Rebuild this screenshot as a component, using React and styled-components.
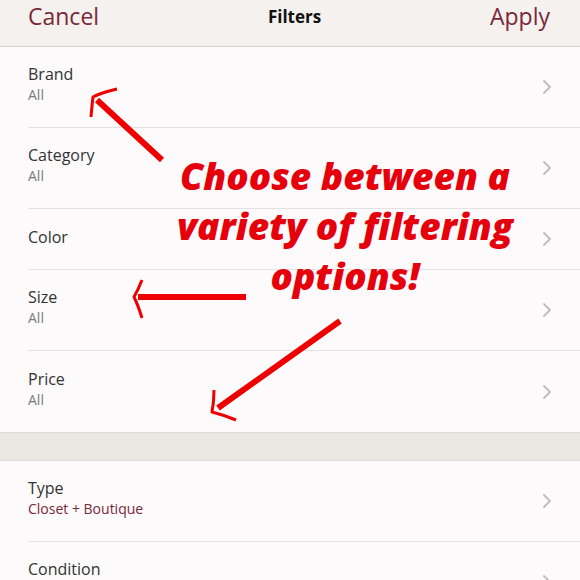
import React from "react";
import styled, { createGlobalStyle } from "styled-components";

const Global = createGlobalStyle`
  html, body { margin: 0; padding: 0; background: #fcfafb; }
  body { font-family: "Open Sans", "Liberation Sans", sans-serif; }
  * { box-sizing: border-box; }
`;

const Screen = styled.div`
  position: relative;
  width: 580px;
  height: 580px;
  overflow: hidden;
  background: #fcfafb;
`;

const Header = styled.div`
  height: 47px;
  display: flex;
  align-items: flex-start;
  justify-content: space-between;
  padding: 0 30px 0 28px;
  background: #f4f1ee;
  border-bottom: 1px solid #d6d3d1;
`;

const HeaderButton = styled.span`
  font-family: "Open Sans", sans-serif;
  font-size: 23px;
  line-height: 32px;
  color: #7a2838;
  font-weight: 400;
`;

const Title = styled.span`
  font-family: "Open Sans", sans-serif;
  font-size: 17px;
  font-weight: 700;
  line-height: 34px;
  color: #111;
`;

const List = styled.div`
  display: flex;
  flex-direction: column;
`;

const Row = styled.div`
  height: ${(p) => (p.single ? 61 : 81)}px;
  margin-left: 28px;
  padding-right: 28px;
  display: flex;
  align-items: center;
  justify-content: space-between;
  border-bottom: ${(p) => (p.last ? "none" : "1px solid #e4e1e2")};
`;

const Texts = styled.div`
  display: flex;
  flex-direction: column;
  gap: 1px;
  margin-top: -5px;
`;

const Label = styled.div`
  font-size: 16px;
  line-height: 20px;
  color: #333;
`;

const Sub = styled.div`
  font-size: 14px;
  line-height: 20px;
  color: ${(p) => (p.accent ? "#7a2838" : "#7a7a7a")};
`;

const Gap = styled.div`
  height: 29px;
  background: #ebe8e4;
  border-top: 1px solid #dedbd8;
  border-bottom: 1px solid #dedbd8;
`;

const Chevron = () => (
  <svg width="10" height="16" viewBox="0 0 10 16">
    <path d="M2 2 L8 8 L2 14" fill="none" stroke="#bdbdbd" strokeWidth="1.8" strokeLinecap="round" strokeLinejoin="round" />
  </svg>
);

const Overlay = styled.svg`
  position: absolute;
  left: 0;
  top: 0;
  pointer-events: none;
`;

const Note = styled.div`
  position: absolute;
  left: 140px;
  top: 151px;
  width: 410px;
  text-align: center;
  font-family: "Open Sans", sans-serif;
  font-style: italic;
  font-weight: 800;
  font-size: 37px;
  line-height: 50px;
  color: #e6000c;
`;

const rows1 = [
  { label: "Brand", sub: "All" },
  { label: "Category", sub: "All" },
  { label: "Color" },
  { label: "Size", sub: "All" },
  { label: "Price", sub: "All", last: true },
];

const rows2 = [
  { label: "Type", sub: "Closet + Boutique", accent: true },
  { label: "Condition", sub: "All" },
];

const renderRow = (r) => (
  <Row key={r.label} single={!r.sub} last={r.last}>
    <Texts>
      <Label>{r.label}</Label>
      {r.sub && <Sub accent={r.accent}>{r.sub}</Sub>}
    </Texts>
    <Chevron />
  </Row>
);

export default function App() {
  return (
    <Screen>
      <Global />
      <Header>
        <HeaderButton>Cancel</HeaderButton>
        <Title>Filters</Title>
        <HeaderButton>Apply</HeaderButton>
      </Header>
      <List>{rows1.map(renderRow)}</List>
      <Gap />
      <List>{rows2.map(renderRow)}</List>
      <Note>
        Choose between a<br />variety of filtering<br />options!
      </Note>
      <Overlay width="580" height="580" viewBox="0 0 580 580">
        <g fill="none" stroke="#ee0000" strokeLinecap="butt" strokeLinejoin="round">
          <path d="M162 160 L97 100" strokeWidth="6" />
          <path d="M117 89 Q100 93 93 97 Q92 105 91 117" strokeWidth="3" />
          <path d="M246 297 L138 297" strokeWidth="6" />
          <path d="M142 280 Q138 290 134 297 Q138 305 142 318" strokeWidth="3" />
          <path d="M340 321 L218 408" strokeWidth="6" />
          <path d="M214 390 Q214 402 212 412 Q224 415 236 420" strokeWidth="3" />
        </g>
      </Overlay>
    </Screen>
  );
}
